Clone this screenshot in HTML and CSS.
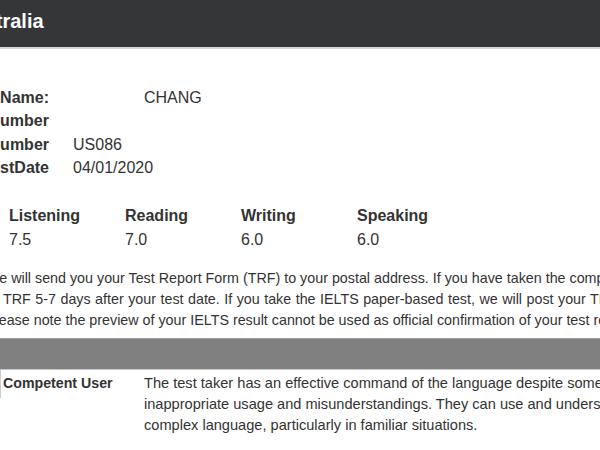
FILE: index.html
```html
<!DOCTYPE html>
<html lang="en">
<head>
<meta charset="utf-8">
<title>IELTS Results</title>
<link rel="stylesheet" href="styles.css">
</head>
<body>
<header class="topbar">
  <h1 class="brand">Australia</h1>
</header>
<main class="page">
  <section class="info">
    <div class="label">Family Name:</div><div class="value value-name">CHANG</div>
    <div class="label">Candidate Number</div><div class="value"></div>
    <div class="label">Centre Number</div><div class="value">US086</div>
    <div class="label">TestDate</div><div class="value">04/01/2020</div>
  </section>

  <section class="scores">
    <div class="score"><div class="score-title">Listening</div><div class="score-value">7.5</div></div>
    <div class="score"><div class="score-title">Reading</div><div class="score-value">7.0</div></div>
    <div class="score"><div class="score-title">Writing</div><div class="score-value">6.0</div></div>
    <div class="score"><div class="score-title">Speaking</div><div class="score-value">6.0</div></div>
  </section>

  <p class="note">
    <span class="note-line">We will send you your Test Report Form (TRF) to your postal address. If you have taken the computer-delivered IELTS test, you will receive</span>
    <span class="note-line note-line-wide">your TRF 5-7 days after your test date. If you take the IELTS paper-based test, we will post your TRF 13 days after your test date.</span>
    <span class="note-line">Please note the preview of your IELTS result cannot be used as official confirmation of your test results.</span>
  </p>

  <div class="band"></div>

  <div class="level">
    <div class="level-name">Competent User</div>
    <div class="level-desc">The test taker has an effective command of the language despite some inaccuracies,<br>inappropriate usage and misunderstandings. They can use and understand fairly<br>complex language, particularly in familiar situations.</div>
  </div>
</main>
</body>
</html>
```

FILE: styles.css
```css
html, body {
  margin: 0;
  padding: 0;
  background: #ffffff;
}

body {
  width: 600px;
  height: 450px;
  overflow: hidden;
  font-family: "Liberation Sans", Arial, sans-serif;
  color: #333333;
}

.topbar {
  height: 47px;
  background: #353638;
  border-bottom: 2px solid #d6d6d6;
  display: flex;
  align-items: flex-start;
}

.brand {
  margin: 0 0 0 -42px;
  padding-top: 10px;
  font-size: 20px;
  line-height: 23px;
  font-weight: bold;
  color: #ffffff;
  white-space: nowrap;
}

.page {
  margin-left: -20px;
  width: 720px;
}

.info {
  display: grid;
  grid-template-columns: 69px auto;
  column-gap: 24px;
  margin-top: 37px;
  font-size: 16px;
  line-height: 23.4px;
}

.label {
  display: flex;
  justify-content: flex-end;
  font-weight: bold;
  white-space: nowrap;
}

.value {
  min-height: 23.4px;
  white-space: nowrap;
}

.value-name {
  padding-left: 71px;
}

.scores {
  display: grid;
  grid-template-columns: repeat(4, 116px);
  padding-left: 29px;
  margin-top: 24px;
  font-size: 16px;
  line-height: 24px;
}

.score-title {
  font-weight: bold;
}

.note {
  margin: 16px 0 0 6px;
  font-size: 14.3px;
  line-height: 21px;
  white-space: nowrap;
}

.note-line {
  display: block;
}

.note-line-wide {
  margin-left: -15px;
  word-spacing: 0.5px;
}

.band {
  margin-top: 7px;
  margin-left: 20px;
  height: 30px;
  background: #808080;
  border-top: 1px solid #9c9c9c;
  border-bottom: 1px solid #c8c8c8;
}

.level {
  display: flex;
  margin-left: 20px;
  line-height: 21px;
}

.level-name {
  width: 141px;
  flex: none;
  padding: 3px 0 4px 2px;
  border-left: 1px solid #cccccc;
  font-size: 14.2px;
  font-weight: bold;
  align-self: flex-start;
  white-space: nowrap;
}

.level-desc {
  padding-top: 3px;
  font-size: 14.6px;
  white-space: nowrap;
}
```
